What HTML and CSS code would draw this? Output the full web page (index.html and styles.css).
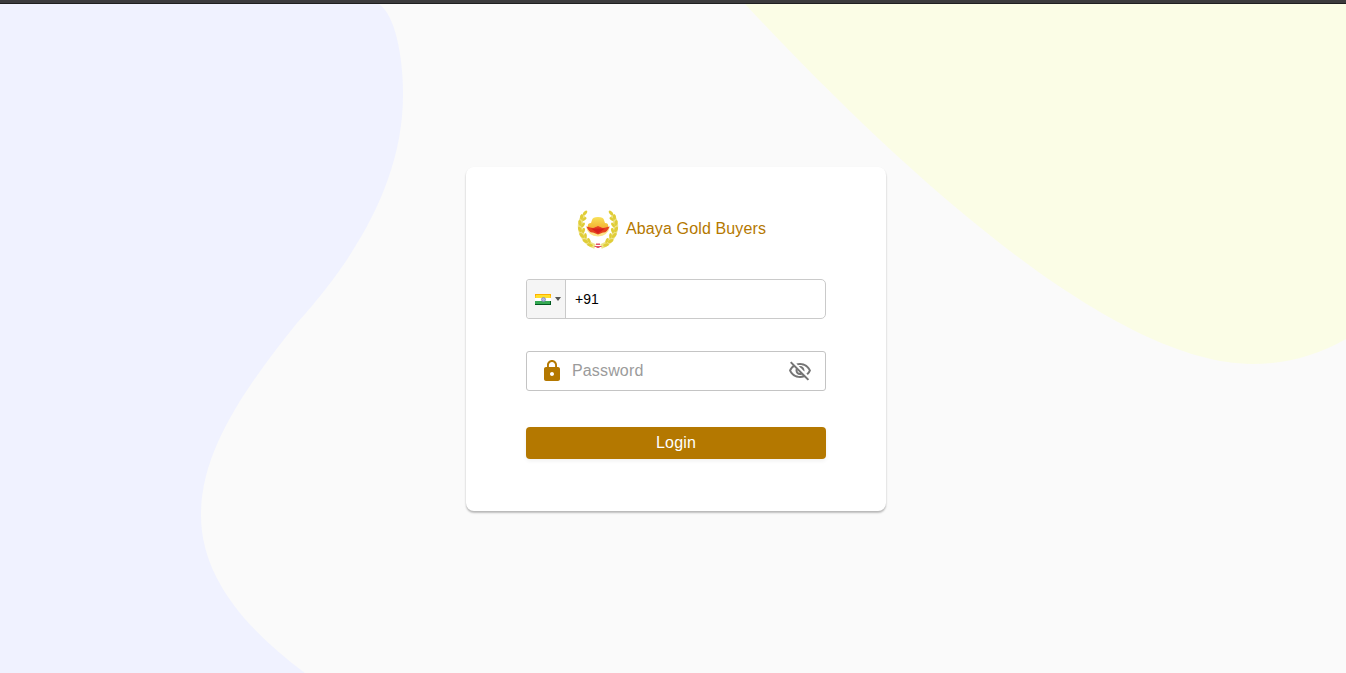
FILE: index.html
```html
<!DOCTYPE html>
<html lang="en">
<head>
<meta charset="utf-8">
<title>Abaya Gold Buyers</title>
<link rel="stylesheet" href="styles.css">
</head>
<body>
<div class="topbar"></div>
<svg class="backdrop" viewBox="0 0 1346 673" aria-hidden="true">
  <path fill="#f0f2ff" d="M0 4H379C395 15 403 55 403 95C403 182 354 260 297 323C245 388 201 450 201 515C201 580 250 632 305 673H0Z"/>
  <path fill="#fbfde6" d="M745 4C870 138 1100 364 1252 364C1287 364 1318 355 1346 339V4Z"/>
</svg>
<main class="page">
  <form class="card">
    <div class="brand">
      <svg class="logo" viewBox="0 0 42 42" aria-hidden="true">
        <defs>
          <linearGradient id="gold" x1="0" y1="0" x2="0" y2="1"><stop offset="0" stop-color="#f8e25a"/><stop offset="1" stop-color="#f3a928"/></linearGradient>
          <g id="branch" fill="#e0cd38">
            <path d="M6.500 7Q-1 20 8 31.500Q12 36.500 18 38.500" fill="none" stroke="#eee38a" stroke-width="4.500"/>
            <ellipse cx="8" cy="5" rx="1.500" ry="3" transform="rotate(38 8 5)"/>
            <ellipse cx="4.600" cy="9" rx="1.600" ry="2.800" transform="rotate(5 4.600 9)"/>
            <ellipse cx="7.300" cy="11" rx="1.400" ry="2.600" transform="rotate(52 7.300 11)"/>
            <ellipse cx="3" cy="15" rx="1.600" ry="3" transform="rotate(-12 3 15)"/>
            <ellipse cx="6" cy="17" rx="1.400" ry="2.700" transform="rotate(36 6 17)"/>
            <ellipse cx="3" cy="21.500" rx="1.600" ry="3" transform="rotate(-26 3 21.500)"/>
            <ellipse cx="6.500" cy="22.500" rx="1.400" ry="2.700" transform="rotate(18 6.500 22.500)"/>
            <ellipse cx="4.800" cy="27.500" rx="1.600" ry="3" transform="rotate(-43 4.800 27.500)"/>
            <ellipse cx="8.500" cy="27.800" rx="1.400" ry="2.700" transform="rotate(-2 8.500 27.800)"/>
            <ellipse cx="8.300" cy="33" rx="1.600" ry="3" transform="rotate(-62 8.300 33)"/>
            <ellipse cx="12" cy="32.500" rx="1.400" ry="2.700" transform="rotate(-24 12 32.500)"/>
            <ellipse cx="13" cy="37" rx="1.500" ry="3" transform="rotate(-74 13 37)"/>
          </g>
        </defs>
        <use href="#branch"/>
        <use href="#branch" transform="matrix(-1 0 0 1 42 0)"/>
        <path d="M15 12Q15.500 9 21 9T27 12L28 15Q32 15 31 19L27 22H15L11 19Q10 15 14 15Z" fill="url(#gold)"/>
        <path d="M9 18.500L16 20L21 18L26 20L33 18.500Q31 28 21 28.500Q11 28 9 18.500Z" fill="#fbe287"/>
        <path d="M9.500 18.500L16 20L21 18L26 20L32.500 18.500Q30 25 26 24.500L21 26.500L16 24.500Q12 25 9.500 18.500Z" fill="#e5421e"/>
        <path d="M14 20.500H28L21 25.500Z" fill="#d8201e"/>
        <path d="M19 35.500H23V37H19ZM17.500 38H24.500V39H22.500V40H19.500V39H17.500Z" fill="#e25266"/>
      </svg>
      <span>Abaya Gold Buyers</span>
    </div>
    <div class="phone">
      <div class="country">
        <svg class="flag" viewBox="0 0 16 11" aria-label="India">
          <path fill="#ffb000" d="M0 0h16v2H0z"/><path fill="#ffe12b" d="M1 1h14v3H1z"/><path fill="#fff" d="M0 4h16v3H0z"/><path fill="#ffc51a" d="M0 2h1v2H0zM15 2h1v2h-1z"/>
          <path fill="#35a853" d="M0 7h16v3H0z"/><path fill="#00591f" d="M0 10h16v1H0zM15 7h1v4h-1z"/>
          <circle cx="8.500" cy="5.500" r="2" fill="#b6b9df" stroke="#7780b8" stroke-width=".7"/>
        </svg>
        <span class="caret"></span>
      </div>
      <span class="dial">+91</span>
    </div>
    <div class="password">
      <svg class="lock" viewBox="0 0 24 24" aria-hidden="true"><path d="M18 8h-1V6c0-2.76-2.24-5-5-5S7 3.240 7 6v2H6c-1.100 0-2 .9-2 2v10c0 1.100.9 2 2 2h12c1.100 0 2-.9 2-2V10c0-1.100-.9-2-2-2zm-6 9c-1.100 0-2-.9-2-2s.9-2 2-2 2 .9 2 2-.9 2-2 2zm3.100-9H8.900V6c0-1.710 1.390-3.100 3.100-3.100s3.100 1.390 3.100 3.100v2z"/></svg>
      <span class="placeholder">Password</span>
      <svg class="eye" viewBox="0 0 24 24" aria-hidden="true"><path d="M12 6c3.790 0 7.170 2.130 8.820 5.500-.59 1.220-1.420 2.270-2.410 3.120l1.410 1.410c1.390-1.230 2.490-2.770 3.180-4.530C21.270 7.110 17 4 12 4c-1.270 0-2.490.2-3.640.57l1.650 1.650C10.660 6.090 11.320 6 12 6zm-1.070 1.140L13 9.210c.57.25 1.030.71 1.280 1.280l2.070 2.070c.08-.34.14-.7.14-1.070C16.500 9.010 14.480 7 12 7c-.37 0-.72.05-1.070.14zM2.010 3.870l2.680 2.680C3.060 7.830 1.770 9.530 1 11.500 2.730 15.890 7 19 12 19c1.520 0 2.980-.29 4.320-.82l3.420 3.420 1.410-1.410L3.420 2.450 2.010 3.870zm7.500 7.500 2.610 2.610c-.04.01-.08.02-.12.02-1.380 0-2.500-1.120-2.500-2.500 0-.05.01-.08.01-.13zm-3.400-3.400 1.750 1.750C7.630 10.270 7.500 10.870 7.500 11.500c0 2.480 2.020 4.500 4.500 4.500.63 0 1.230-.13 1.770-.36l.98.98c-.88.24-1.800.38-2.750.38-3.790 0-7.170-2.130-8.820-5.500.7-1.430 1.720-2.610 2.930-3.530z"/></svg>
    </div>
    <button class="login" type="button">Login</button>
  </form>
</main>
</body>
</html>
```
FILE: styles.css
```css
* { box-sizing: border-box; }
body {
  margin: 0;
  height: 673px;
  overflow: hidden;
  background: #fafafa;
  font: 16px/24px "Liberation Sans", Arial, sans-serif;
}
.topbar {
  height: 4px;
  background: #3c3b3d;
  border-bottom: 1px solid #1f1f20;
}
.backdrop {
  position: absolute;
  inset: 0;
  z-index: -1;
  width: 1346px;
  height: 673px;
}
.page {
  display: flex;
  justify-content: center;
  padding: 163px 0 0 6px;
}
.card {
  width: 420px;
  height: 344px;
  padding: 41px 60px 0;
  background: #fff;
  border-radius: 8px;
  box-shadow: 0 2px 2px rgba(0,0,0,.22), 0 1px 2px rgba(0,0,0,.08);
}
.brand {
  display: flex;
  align-items: center;
  height: 42px;
  padding-left: 51px;
  gap: 7px;
  color: #b47800;
  letter-spacing: .13px;
  white-space: nowrap;
}
.logo { width: 42px; height: 42px; }
.phone {
  display: flex;
  height: 40px;
  margin-top: 29px;
  border: 1px solid #cacaca;
  border-radius: 3px 5px 5px 3px;
  background: #fff;
}
.country {
  display: flex;
  align-items: center;
  width: 39px;
  padding: 1px 0 0 8px;
  gap: 4px;
  background: #f5f5f5;
  border-right: 1px solid #cacaca;
  border-radius: 3px 0 0 3px;
}
.flag { width: 16px; height: 11px; }
.caret {
  margin-top: -2px;
  border: 3px solid transparent;
  border-top: 4px solid #555;
  border-bottom: 0;
}
.dial {
  padding-left: 9px;
  font-size: 14px;
  line-height: 38px;
  color: #000;
}
.password {
  display: flex;
  align-items: center;
  height: 40px;
  margin-top: 32px;
  padding: 0 13px;
  border: 1px solid #c4c4c4;
  border-radius: 3px;
}
.lock { width: 24px; height: 24px; fill: #b47800; }
.placeholder {
  flex: 1;
  padding-left: 8px;
  color: #9b9b9b;
  letter-spacing: .15px;
}
.eye { width: 24px; height: 24px; fill: #757575; }
.login {
  display: block;
  width: 100%;
  height: 32px;
  margin-top: 36px;
  padding: 0;
  border: 0;
  border-radius: 4px;
  background: #b47800;
  color: #fff;
  font: 16px/30px "Liberation Sans", Arial, sans-serif;
  letter-spacing: .15px;
  box-shadow: 0 2px 4px rgba(0,0,0,.06);
}
```
